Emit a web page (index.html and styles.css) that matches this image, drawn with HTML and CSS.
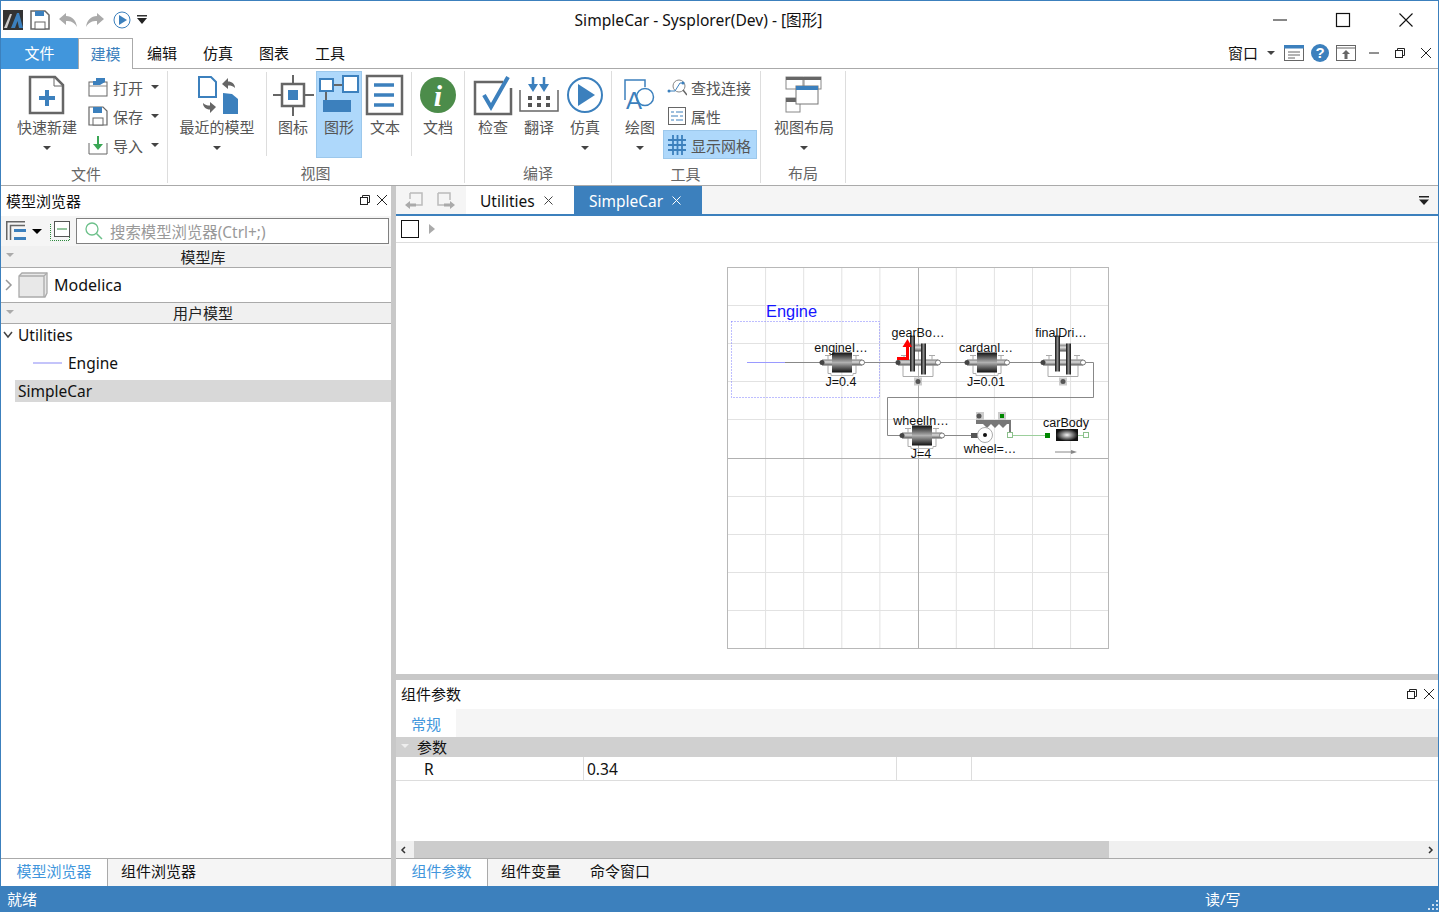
FILE: index.html
```html
<!DOCTYPE html>
<html>

	<head>
		<meta charset="utf-8" />
		<title>SimpleCar - Sysplorer(Dev) - [图形]</title>
		<link rel="stylesheet" href="styles.css">
	</head>

	<body>
		<div class="window">
			<header class="titlebar">
				<div class="quick">
					<svg class="logo" width="20" height="20" viewBox="0 0 20 20"><rect width="20" height="20" fill="#333"/><path d="M1 18L7 4H9L4 18Z" fill="#ccc"/><path d="M8 18L14 3H16L20 18H16L14.500 11L12 18Z" fill="#3c80bd"/></svg>
					<svg width="20" height="20" viewBox="0 0 20 20"><path d="M1 1H15L19 5V19H1Z" fill="#fff" stroke="#666" stroke-width="1.500"/><rect x="5" y="1" width="9" height="5" fill="#3c80bd"/><rect x="5" y="12" width="10" height="7" fill="#fff" stroke="#666"/></svg>
					<svg class="gap" width="18" height="14" viewBox="0 0 18 14"><path d="M0 6L7 0V3C13 3 17 7 18 14C15 9 12 8 7 8V12Z" fill="#aaa"/></svg>
					<svg class="gap" width="18" height="14" viewBox="0 0 18 14"><path d="M18 6L11 0V3C5 3 1 7 0 14C3 9 6 8 11 8V12Z" fill="#aaa"/></svg>
					<svg class="gap" width="18" height="18" viewBox="0 0 18 18"><circle cx="9" cy="9" r="8" fill="#fff" stroke="#3c80bd"/><path d="M6 4L14 9L6 14Z" fill="#3c80bd"/></svg>
					<svg class="gap-s" width="10" height="10" viewBox="0 0 10 10"><rect y="0" width="10" height="1.500" fill="#333"/><path d="M0 3H10L5 9Z" fill="#222"/></svg>
				</div>
				<div class="apptitle">SimpleCar - Sysplorer(Dev) - [图形]</div>
				<div class="winctl">
					<svg width="16" height="16" viewBox="0 0 16 16"><path d="M1 8H15" stroke="#111"/></svg>
					<svg width="16" height="16" viewBox="0 0 16 16"><rect x="1.500" y="1.500" width="13" height="13" fill="none" stroke="#111" stroke-width="1.200"/></svg>
					<svg width="16" height="16" viewBox="0 0 16 16"><path d="M1.500 1.500L14.500 14.500M14.500 1.500L1.500 14.500" stroke="#111" stroke-width="1.100"/></svg>
				</div>
			</header>

			<nav class="menubar">
				<div class="menu-file">文件</div>
				<div class="menu-active">建模</div>
				<div class="menu-item">编辑</div>
				<div class="menu-item">仿真</div>
				<div class="menu-item">图表</div>
				<div class="menu-item">工具</div>
				<div class="menu-right">
					<span>窗口</span>
					<i class="caret caret-menu"></i>
					<svg width="20" height="16" viewBox="0 0 20 16"><rect x=".5" y=".5" width="19" height="15" fill="#fff" stroke="#666"/><rect width="20" height="3.500" fill="#3c80bd"/><path d="M4 7H16M4 10H16M4 13H11" stroke="#666"/></svg>
					<svg class="help" width="18" height="18" viewBox="0 0 18 18"><circle cx="9" cy="9" r="9" fill="#3c80bd"/><text x="9" y="14" text-anchor="middle" class="help-mark">?</text></svg>
					<svg class="help" width="20" height="16" viewBox="0 0 20 16"><rect x=".5" y=".5" width="19" height="15" fill="#fff" stroke="#666"/><path d="M0 3H20" stroke="#666"/><path d="M10 5L14 9H11.500V14H8.500V9H6Z" fill="#666"/></svg>
					<svg class="mdi" width="10" height="10" viewBox="0 0 10 10"><path d="M0 5H10" stroke="#222"/></svg>
					<svg class="mdi" width="10" height="10" viewBox="0 0 10 10"><rect x=".5" y="2.500" width="7" height="7" fill="#fff" stroke="#222"/><path d="M2.500 2.500V.5H9.500V7.500H7.500" fill="none" stroke="#222"/></svg>
					<svg class="mdi" width="10" height="10" viewBox="0 0 10 10"><path d="M0 0L10 10M10 0L0 10" stroke="#222"/></svg>
				</div>
			</nav>

			<section class="ribbon">
				<div class="group group-file">
					<div class="group-body">
						<div class="big big-new">
							<svg width="42" height="42" viewBox="0 0 42 42"><path d="M4 3H29L37 11V39H4Z" fill="#fff" stroke="#666" stroke-width="2.500"/><path d="M28 3V12H37" fill="none" stroke="#666"/><path d="M21 16V32M13 24H29" stroke="#3c80bd" stroke-width="4"/></svg>
							<span>快速新建</span><i class="caret"></i>
						</div>
						<div class="smalls smalls-file">
							<div class="small"><svg width="20" height="20" viewBox="0 0 20 20"><rect x="1" y="5" width="18" height="14" fill="#fff" stroke="#666"/><path d="M1 9H19" stroke="#888"/><path d="M5 8V4H8V1H17V5L12 8Z" fill="#3c80bd"/></svg><span>打开</span><i class="caret"></i></div>
							<div class="small"><svg width="20" height="20" viewBox="0 0 20 20"><path d="M1 1H15L19 5V19H1Z" fill="#fff" stroke="#666" stroke-width="1.200"/><rect x="5" y="1" width="9" height="6" fill="#3c80bd"/><rect x="5" y="12" width="10" height="7" fill="#fff" stroke="#666"/></svg><span>保存</span><i class="caret"></i></div>
							<div class="small"><svg width="20" height="20" viewBox="0 0 20 20"><path d="M1 8V19H19V8" fill="none" stroke="#666"/><path d="M10 1V11" stroke="#3aa655" stroke-width="2"/><path d="M5 9H15L10 15Z" fill="#3aa655"/></svg><span>导入</span><i class="caret"></i></div>
						</div>
					</div>
					<div class="group-label label-file">文件</div>
				</div>

				<div class="group group-view">
					<div class="group-body">
						<div class="big big-recent">
							<svg width="42" height="42" viewBox="0 0 42 42"><path d="M3 3H15L20 8V23H3Z" fill="#fff" stroke="#3c80bd" stroke-width="2"/><path d="M27 19V40H42V25L36 20Z" fill="#3c80bd"/><path d="M26 10L32 4V7.500C36 7.500 39 10 39 14C37 12 35 11.500 32 11.500V15Z" fill="#666"/><path d="M20 33L14 39V35.500C10 35.500 7 33 7 29C9 31 11 31.500 14 31.500V28Z" fill="#666"/></svg>
							<span>最近的模型</span><i class="caret"></i>
						</div>
						<div class="sep"></div>
						<div class="big">
							<svg width="42" height="42" viewBox="0 0 42 42"><path d="M21 1V11M21 32V42M1 21H10M32 21H42" stroke="#666" stroke-width="2"/><rect x="10" y="10" width="22" height="22" fill="#fff" stroke="#666" stroke-width="2.500"/><rect x="16" y="16" width="10" height="10" fill="#3c80bd"/></svg>
							<span>图标</span>
						</div>
						<div class="big big-on">
							<svg width="42" height="42" viewBox="0 0 42 42"><path d="M8 18V30M15 11H25" stroke="#666" stroke-width="2"/><rect x="2" y="5" width="13" height="12" fill="#fff" stroke="#3c80bd" stroke-width="2"/><rect x="25" y="2" width="15" height="16" fill="#fff" stroke="#3c80bd" stroke-width="2"/><rect x="5" y="26" width="28" height="12" fill="#3c80bd"/></svg>
							<span>图形</span>
						</div>
						<div class="big">
							<svg width="42" height="42" viewBox="0 0 42 42"><rect x="3" y="2" width="35" height="38" fill="#fff" stroke="#666" stroke-width="2.500"/><path d="M10 11H30M10 21H30M10 31H30" stroke="#3c80bd" stroke-width="3.500"/></svg>
							<span>文本</span>
						</div>
						<div class="sep sep-doc"></div>
						<div class="big">
							<svg width="42" height="42" viewBox="0 0 42 42"><circle cx="21" cy="21" r="18" fill="#4c8c4a"/><text x="21" y="32" text-anchor="middle" class="info-mark">i</text></svg>
							<span>文档</span>
						</div>
					</div>
					<div class="group-label label-view">视图</div>
				</div>

				<div class="group group-compile">
					<div class="group-body">
						<div class="big">
							<svg width="42" height="42" viewBox="0 0 42 42"><path d="M39 14V40H3V8H31" fill="none" stroke="#666" stroke-width="2.500"/><path d="M12 21L19 33L36 3" fill="none" stroke="#3c80bd" stroke-width="4"/></svg>
							<span>检查</span>
						</div>
						<div class="big">
							<svg width="42" height="42" viewBox="0 0 42 42"><path d="M2 16V37H40V16" fill="none" stroke="#666" stroke-width="1.500"/><path d="M15 3V12M26 3V12" stroke="#3c80bd" stroke-width="2.500"/><path d="M10 10H20L15 18ZM21 10H31L26 18Z" fill="#3c80bd"/><path d="M10 22h4v4h-4zM19 22h4v4h-4zM28 22h4v4h-4zM10 29h4v4h-4zM19 29h4v4h-4zM28 29h4v4h-4z" fill="#555"/></svg>
							<span>翻译</span>
						</div>
						<div class="big">
							<svg width="42" height="42" viewBox="0 0 42 42"><circle cx="21" cy="21" r="17" fill="#fff" stroke="#3c80bd" stroke-width="2"/><path d="M14 10L31 21L14 32Z" fill="#3c80bd"/></svg>
							<span>仿真</span><i class="caret"></i>
						</div>
					</div>
					<div class="group-label label-compile">编译</div>
				</div>

				<div class="group group-tools">
					<div class="group-body">
						<div class="big">
							<svg width="42" height="42" viewBox="0 0 42 42"><path d="M6 26V6H26V13" fill="none" stroke="#3c80bd" stroke-width="1.500"/><circle cx="26" cy="23" r="8.500" fill="#fff" stroke="#3c80bd" stroke-width="1.500"/><text x="7" y="35" class="draw-mark">A</text></svg>
							<span>绘图</span><i class="caret"></i>
						</div>
						<div class="smalls">
							<div class="small small-tool"><svg width="20" height="20" viewBox="0 0 20 20"><circle cx="12" cy="9" r="6" fill="#fff" stroke="#888"/><path d="M16 13L20 18" stroke="#666" stroke-width="1.500"/><path d="M1 14H8L13 6H16" fill="none" stroke="#3c80bd"/><circle cx="2" cy="14" r="1.500" fill="#3c80bd"/><circle cx="16" cy="6" r="1.500" fill="#3c80bd"/></svg><span>查找连接</span></div>
							<div class="small small-tool"><svg width="20" height="20" viewBox="0 0 20 20"><rect x="1.500" y="1.500" width="17" height="17" fill="#fff" stroke="#666"/><path d="M4 6H7M9 6H16M4 10H11M13 10H16M4 14H7M9 14H16" stroke="#3c80bd"/></svg><span>属性</span></div>
							<div class="small small-tool small-on"><svg width="20" height="20" viewBox="0 0 20 20"><path d="M6 0V20M10.500 0V20M15 0V20M1 5H19M1 10H19M1 15H19" stroke="#3c80bd" stroke-width="1.800"/></svg><span>显示网格</span></div>
						</div>
					</div>
					<div class="group-label label-tools">工具</div>
				</div>

				<div class="group group-layout">
					<div class="group-body">
						<div class="big big-layout">
							<svg width="42" height="42" viewBox="0 0 42 42"><rect x="3" y="3" width="17" height="12" fill="#fff" stroke="#888"/><rect x="21" y="3" width="17" height="12" fill="#fff" stroke="#888"/><rect x="3" y="24" width="14" height="14" fill="#fff" stroke="#888"/><path d="M3 3H38V6H3ZM3 24H17V28H3Z" fill="#666"/><rect x="13" y="12" width="22" height="18" fill="#fff" stroke="#777"/><rect x="13" y="12" width="22" height="4" fill="#3c80bd"/></svg>
							<span>视图布局</span><i class="caret"></i>
						</div>
					</div>
					<div class="group-label label-layout">布局</div>
				</div>
			</section>

			<main class="workspace">
				<aside class="browser">
					<div class="pane-title">
						<span>模型浏览器</span>
						<div class="pane-ctl">
							<svg width="10" height="10" viewBox="0 0 10 10"><rect x=".5" y="2.500" width="7" height="7" fill="#fff" stroke="#222"/><path d="M2.500 2.500V.5H9.500V7.500H7.500" fill="none" stroke="#222"/></svg>
							<svg width="10" height="10" viewBox="0 0 10 10"><path d="M0 0L10 10M10 0L0 10" stroke="#222"/></svg>
						</div>
					</div>
					<div class="search-row">
						<svg width="20" height="20" viewBox="0 0 20 20"><path d="M.75 19V.75H19" fill="none" stroke="#666" stroke-width="1.500"/><path d="M4.500 19V4.500H19" fill="none" stroke="#666" stroke-width="1.500"/><path d="M8 9.500H20M8 17.500H20" stroke="#3c80bd" stroke-width="3"/></svg>
						<i class="caret caret-black"></i>
						<svg class="collapse" width="20" height="20" viewBox="0 0 20 20"><path d="M.5 3V19.500H19.500V3" fill="none" stroke="#2a8a3c" stroke-dasharray="1 1"/><rect x="4.500" y=".5" width="15" height="15" fill="#fff" stroke="#555"/><path d="M7 8H17" stroke="#2a8a3c"/></svg>
						<div class="search-box">
							<svg width="18" height="18" viewBox="0 0 18 18"><circle cx="7" cy="7" r="6" fill="none" stroke="#6cc08a" stroke-width="1.300"/><path d="M11.500 11.500L17 17" stroke="#6cc08a" stroke-width="1.500"/></svg>
							<span>搜索模型浏览器(Ctrl+;)</span>
						</div>
					</div>
					<div class="section"><i class="tri"></i>模型库</div>
					<div class="lib-row">
						<svg width="8" height="12" viewBox="0 0 8 12"><path d="M1 1L6 6L1 11" fill="none" stroke="#999" stroke-width="1.500"/></svg>
						<svg class="cube" width="30" height="26" viewBox="0 0 30 26"><path d="M1 4L4 1H29V21L27 25H1Z" fill="#e8e8e8" stroke="#aaa" stroke-width="1.300"/><path d="M1 4H26V25M26 4L29 1" fill="none" stroke="#aaa" stroke-width="1.300"/></svg>
						<span>Modelica</span>
					</div>
					<div class="section section-top"><i class="tri"></i>用户模型</div>
					<div class="tree-row tree-parent">
						<svg width="10" height="8" viewBox="0 0 10 8"><path d="M1 1L5 6L9 1" fill="none" stroke="#444" stroke-width="1.500"/></svg>
						<span>Utilities</span>
					</div>
					<div class="tree-row tree-child"><i class="pkg-line"></i><span>Engine</span></div>
					<div class="tree-sel">SimpleCar</div>
					<div class="fill"></div>
					<div class="bottom-tabs">
						<div class="btab-on btab-left">模型浏览器</div>
						<div class="btab btab-second">组件浏览器</div>
					</div>
				</aside>

				<div class="content">
					<div class="doc-tabs">
						<div class="doc-nav">
							<svg width="20" height="20" viewBox="0 0 20 20"><path d="M6 3H18V15H9" fill="none" stroke="#bbb" stroke-width="1.500"/><path d="M6 3V9" stroke="#bbb" stroke-width="1.500"/><path d="M1 15L6 11V13.500H12V16.500H6V19Z" fill="#aaa"/></svg>
							<svg width="20" height="20" viewBox="0 0 20 20"><path d="M2 3H14V10M2 3V15H8" fill="none" stroke="#bbb" stroke-width="1.500"/><path d="M19 15L14 11V13.500H8V16.500H14V19Z" fill="#aaa"/></svg>
						</div>
						<div class="doc-tab">Utilities<svg width="9" height="9" viewBox="0 0 9 9"><path d="M.5 .5L8.500 8.500M8.500 .5L.5 8.500" stroke="#444"/></svg></div>
						<div class="doc-tab doc-tab-on">SimpleCar<svg width="9" height="9" viewBox="0 0 9 9"><path d="M.5 .5L8.500 8.500M8.500 .5L.5 8.500" stroke="#fff"/></svg></div>
						<svg class="doc-more" width="10" height="10" viewBox="0 0 10 10"><rect width="10" height="1.500" fill="#222"/><path d="M0 3.500H10L5 9Z" fill="#222"/></svg>
					</div>
					<div class="canvas-tools"><i class="check"></i><i class="tri-right"></i></div>

					<div class="canvas">
						<svg class="diagram" width="382" height="382" viewBox="727 267 382 382">
							<defs>
								<linearGradient id="drum" x1="0" y1="0" x2="0" y2="1">
									<stop offset="0" stop-color="#111"/><stop offset=".5" stop-color="#b0b0b0"/><stop offset="1" stop-color="#111"/>
								</linearGradient>
								<linearGradient id="shaft" x1="0" y1="0" x2="0" y2="1">
									<stop offset="0" stop-color="#777"/><stop offset=".4" stop-color="#ddd"/><stop offset="1" stop-color="#555"/>
								</linearGradient>
								<linearGradient id="disc" x1="0" y1="0" x2="1" y2="0">
									<stop offset="0" stop-color="#111"/><stop offset=".5" stop-color="#888"/><stop offset="1" stop-color="#111"/>
								</linearGradient>
								<radialGradient id="body"><stop offset="0" stop-color="#f4f4f4"/><stop offset="1" stop-color="#111"/></radialGradient>
								<g id="inertia">
									<path d="M-14 -3V-7M-17 -7H-11M14 -3V-7M11 -7H17M-14 3V11H-11M14 3V11H11" fill="none" stroke="#aaa"/>
									<path d="M-11 11V13H11V11" fill="none" stroke="#bbb"/>
									<rect x="-20" y="-3" width="10" height="6" fill="url(#shaft)"/>
									<rect x="10" y="-3" width="10" height="6" fill="url(#shaft)"/>
									<circle cx="-20" r="2.500" fill="#444"/>
									<circle cx="20" r="2.500" fill="#fff" stroke="#777"/>
									<rect x="-10" y="-10" width="20" height="20" fill="url(#drum)"/>
								</g>
								<g id="gear">
									<path d="M-15 3V14H15V3M-14 -3V-7M14 -3V-7M-17 -7H-11M11 -7H17" fill="none" stroke="#aaa"/>
									<rect x="-20" y="-3" width="12" height="6" fill="url(#shaft)"/>
									<rect x="-4" y="-18" width="8" height="7" fill="url(#shaft)"/>
									<rect x="-4" y="-3" width="8" height="6" fill="url(#shaft)"/>
									<rect x="8" y="-3" width="12" height="6" fill="url(#shaft)"/>
									<rect x="-8" y="-27" width="5" height="36" fill="url(#disc)"/>
									<rect x="3" y="-19" width="5" height="31" fill="url(#disc)"/>
									<circle cx="-20" r="2.500" fill="#444"/>
									<circle cx="20" r="2.500" fill="#fff" stroke="#777"/>
									<rect x="-4" y="15" width="8" height="8" fill="#ccc"/>
									<circle cy="19" r="2.500" fill="#555"/>
								</g>
							</defs>
							<path class="grid" d="M765.600 267V649M803.700 267V649M841.800 267V649M879.900 267V649M956.300 267V649M994.400 267V649M1032.500 267V649M1070.600 267V649M727 305.500H1109M727 343.500H1109M727 381.500H1109M727 419.500H1109M727 496.500H1109M727 534.500H1109M727 572.500H1109M727 610.500H1109"/>
							<path class="axis" d="M918.500 267V649M727 458.500H1109"/>
							<rect class="frame" x="727.500" y="267.500" width="381" height="381"/>

							<rect class="select" x="731.500" y="321.500" width="148" height="76"/>
							<text class="engine-label" x="766" y="317">Engine</text>

							<path d="M747 362.500H785" stroke="#9a9aff"/>
							<path d="M785 362.500H822" stroke="#888"/>
							<path class="wire" d="M862 362.500H898M938 362.500H967M1008 362.500H1043M1083 362.500H1093.500V397.500H887.500V435.500H901M943 435.500H974"/>

							<use href="#inertia" x="842" y="362.500"/>
							<use href="#gear" x="918" y="362.500"/>
							<use href="#inertia" x="987" y="362.500"/>
							<use href="#gear" x="1063" y="362.500"/>
							<use href="#inertia" x="922" y="435.500"/>

							<path d="M897 358.500H907.500V345" fill="none" stroke="#f00" stroke-width="3"/>
							<path d="M902.500 347L907.500 339L912 347Z" fill="#f00"/>

							<rect x="976" y="412" width="8" height="8" fill="#ccc"/><circle cx="979" cy="416" r="2.500" fill="#555"/>
							<rect x="998" y="412" width="8" height="8" fill="#ccc"/><rect x="1000" y="414" width="4" height="4" fill="#080"/>
							<path d="M976 420H1011V436H1009V424H1007L1003 428L999 424L995 428L991 424L987 428L983 424H976Z" fill="#777"/>
							<rect x="971" y="433" width="8" height="5" fill="#555"/>
							<circle cx="985" cy="435" r="7.500" fill="#fff" stroke="#aaa"/>
							<circle cx="985" cy="435" r="2" fill="#111"/>
							<path d="M1012 435.500H1046" stroke="#9ccf9c"/>
							<rect x="1007.500" y="432.500" width="5" height="5" fill="#fff" stroke="#8bc08b"/>
							<rect x="1045" y="433" width="5" height="5" fill="#080"/>
							<rect x="1056" y="429" width="22" height="12" fill="url(#body)"/>
							<path d="M1078 435.500H1084" stroke="#9ccf9c"/>
							<rect x="1083.500" y="432.500" width="5" height="5" fill="#fff" stroke="#8bc08b"/>
							<path d="M1055 452H1072" stroke="#888"/><path d="M1071 450L1077 452L1071 454Z" fill="#888"/>

							<text class="label" x="841" y="352">engineI…</text>
							<text class="label" x="841" y="386">J=0.4</text>
							<text class="label" x="918" y="337">gearBo…</text>
							<text class="label" x="986" y="352">cardanI…</text>
							<text class="label" x="986" y="386">J=0.01</text>
							<text class="label" x="1061" y="337">finalDri…</text>
							<text class="label" x="921" y="425">wheelIn…</text>
							<text class="label" x="921" y="458">J=4</text>
							<text class="label" x="990" y="453">wheel=…</text>
							<text class="label" x="1066" y="427">carBody</text>
						</svg>
					</div>

					<div class="params">
						<div class="params-title">
							<span>组件参数</span>
							<div class="pane-ctl">
								<svg width="10" height="10" viewBox="0 0 10 10"><rect x=".5" y="2.500" width="7" height="7" fill="#fff" stroke="#222"/><path d="M2.500 2.500V.5H9.500V7.500H7.500" fill="none" stroke="#222"/></svg>
								<svg width="10" height="10" viewBox="0 0 10 10"><path d="M0 0L10 10M10 0L0 10" stroke="#222"/></svg>
							</div>
						</div>
						<div class="params-tabs"><div class="params-tab">常规</div></div>
						<div class="params-head"><i class="tri tri-pale"></i>参数</div>
						<div class="params-row">
							<div class="cell cell-name">R</div>
							<div class="cell cell-value">0.34</div>
							<div class="cell cell-unit"></div>
							<div class="cell cell-rest"></div>
						</div>
						<div class="fill"></div>
						<div class="hscroll">
							<svg width="18" height="16" viewBox="0 0 18 16"><path d="M9 5L6 8L9 11" fill="none" stroke="#333" stroke-width="1.500"/></svg>
							<div class="hscroll-thumb"></div>
							<svg class="hscroll-end" width="18" height="16" viewBox="0 0 18 16"><path d="M9 5L12 8L9 11" fill="none" stroke="#333" stroke-width="1.500"/></svg>
						</div>
						<div class="bottom-tabs">
							<div class="btab-on btab-params">组件参数</div>
							<div class="btab btab-vars">组件变量</div>
							<div class="btab btab-cmd">命令窗口</div>
						</div>
					</div>
				</div>
			</main>

			<footer class="statusbar">
				<span>就绪</span>
				<span class="rw">读/写</span>
				<svg class="grip" width="10" height="10" viewBox="0 0 10 10"><path d="M8 0h2v2H8zM4 4h2v2H4zM8 4h2v2H8zM0 8h2v2H0zM4 8h2v2H4zM8 8h2v2H8z" fill="#cfe0f0"/></svg>
			</footer>
		</div>
	</body>

</html>
```

FILE: styles.css
```css
* {
	box-sizing: border-box;
}

html, body {
	margin: 0;
	padding: 0;
}

body {
	width: 1439px;
	height: 912px;
	overflow: hidden;
	background: #fff;
	color: #111;
	font-family: "Noto Sans", "Noto Sans CJK SC", sans-serif;
	font-size: 15px;
}

i {
	display: block;
	font-style: normal;
}

svg {
	display: block;
	flex: none;
}

.window {
	width: 1439px;
	height: 912px;
	display: flex;
	flex-direction: column;
	border: 1px solid #3c80bd;
	border-bottom: 0;
}

/* title bar */
.titlebar {
	height: 37px;
	flex: none;
	display: flex;
	align-items: center;
}

.quick {
	width: 420px;
	padding-left: 2px;
	display: flex;
	align-items: center;
}

.quick .logo {
	margin-right: 7px;
}

.gap {
	margin-left: 9px;
}

.gap-s {
	margin-left: 6px;
}

.apptitle {
	width: 555px;
	text-align: center;
	font-size: 15.600px;
}

.winctl {
	margin-left: auto;
	padding-right: 24px;
	display: flex;
	gap: 47px;
}

/* menu row */
.menubar {
	height: 31px;
	flex: none;
	display: flex;
	align-items: stretch;
	border-bottom: 1px solid #aaa;
	line-height: 30px;
}

.menu-file {
	width: 77px;
	background: #4196dc;
	color: #fff;
	text-align: center;
	margin-bottom: -1px;
}

.menu-active {
	width: 55px;
	background: #fff;
	color: #3c80bd;
	text-align: center;
	border: 1px solid #aaa;
	border-bottom: 0;
	margin-bottom: -1px;
}

.menu-item {
	width: 56px;
	text-align: center;
}

.menu-item:nth-child(3) {
	margin-left: 1px;
}

.menu-right {
	margin-left: auto;
	padding-right: 7px;
	display: flex;
	align-items: center;
}

.menu-right span {
	margin-right: 4px;
}

.help {
	margin-left: 7px;
}

.help-mark {
	font: bold 15px "Liberation Sans", sans-serif;
	fill: #fff;
}

.mdi {
	margin-left: 13px;
}

.mdi + .mdi {
	margin-left: 16px;
}

.caret {
	width: 0;
	height: 0;
	border-left: 4px solid transparent;
	border-right: 4px solid transparent;
	border-top: 4px solid #444;
}

.caret-menu {
	margin: 0 9px 0 5px;
}

.caret-black {
	margin-left: 6px;
	border-left-width: 5px;
	border-right-width: 5px;
	border-top: 5px solid #000;
}

/* ribbon */
.ribbon {
	height: 117px;
	flex: none;
	display: flex;
	border-bottom: 1px solid #aaa;
	color: #555;
}

.group {
	flex: none;
	display: flex;
	flex-direction: column;
	border-right: 1px solid #ddd;
	margin-top: 2px;
	height: 112px;
}

.group-body {
	height: 89px;
	display: flex;
	align-items: flex-start;
}

.group-label {
	margin-top: 5px;
	text-align: center;
	line-height: 20px;
	color: #666;
}

.label-file {
	margin-left: 4px;
}

.label-view {
	margin-right: 6px;
}

.label-compile {
	margin-right: 5px;
}

.label-tools {
	margin-right: 6px;
}

.label-layout {
	margin-right: 7px;
}

.group-file {
	width: 167px;
}

.group-view {
	width: 297px;
	padding-left: 5px;
}

.group-compile {
	width: 147px;
	padding-left: 5px;
}

.group-tools {
	width: 149px;
	padding-left: 5px;
}

.group-layout {
	width: 85px;
	padding-left: 7px;
}

.big {
	width: 46px;
	height: 87px;
	padding-top: 2px;
	display: flex;
	flex-direction: column;
	align-items: center;
	border: 1px solid transparent;
	white-space: nowrap;
	line-height: 20px;
}

.big span {
	margin-top: 1px;
	margin-left: -20px;
	margin-right: -20px;
}

.big .caret {
	margin-top: 9px;
}

.big-new {
	width: 60px;
	margin-left: 16px;
}

.big-recent {
	width: 88px;
}

.big-layout {
	width: 70px;
	margin-left: 1px;
}

.big-on {
	background: #aed8fb;
	border-color: #9cc8ec;
}

.sep {
	width: 1px;
	height: 84px;
	background: #ddd;
	margin: 1px 3px 0 5px;
}

.sep-doc {
	margin: 1px 3px 0 3px;
}

.smalls {
	padding-top: 1px;
	display: flex;
	flex-direction: column;
}

.smalls-file {
	margin-left: 10px;
}

.small {
	height: 29px;
	display: flex;
	align-items: center;
	padding-left: 1px;
}

.small span {
	margin-left: 5px;
	padding-top: 2px;
}

.small .caret {
	margin-left: 8px;
}

.small-tool {
	width: 94px;
	padding-left: 3px;
	border: 1px solid transparent;
}

.small-tool span {
	margin-left: 4px;
}

.small-on {
	background: #aed8fb;
	border-color: #9cc8ec;
}

.info-mark {
	font: italic bold 30px "Liberation Serif", serif;
	fill: #fff;
}

.draw-mark {
	font: 24px "Liberation Sans", sans-serif;
	fill: #3c80bd;
}

/* main area */
.workspace {
	flex: 1;
	min-height: 0;
	display: flex;
}

.browser {
	width: 390px;
	flex: none;
	display: flex;
	flex-direction: column;
}

.pane-title {
	height: 30px;
	flex: none;
	display: flex;
	align-items: center;
	justify-content: space-between;
	padding: 0 4px 2px 5px;
}

.pane-ctl {
	display: flex;
	gap: 7px;
}

.search-row {
	height: 30px;
	flex: none;
	display: flex;
	align-items: center;
	padding-left: 5px;
	background: #f5f5f5;
}

.collapse {
	margin-left: 8px;
}

.search-box {
	width: 313px;
	height: 26px;
	margin-left: 6px;
	padding-left: 8px;
	display: flex;
	align-items: center;
	gap: 7px;
	background: #fff;
	border: 1px solid #808080;
	color: #999;
	font-size: 15.400px;
}

.section {
	height: 22px;
	flex: none;
	display: flex;
	align-items: center;
	justify-content: center;
	position: relative;
	padding-left: 14px;
	background: #f0f0f0;
	border-bottom: 1px solid #aaa;
	line-height: 20px;
	color: #222;
}

.section-top {
	border-top: 1px solid #aaa;
}

.tri {
	position: absolute;
	left: 5px;
	top: 7px;
	width: 0;
	height: 0;
	border-left: 4px solid transparent;
	border-right: 4px solid transparent;
	border-top: 4px solid #aaa;
}

.lib-row {
	height: 34px;
	flex: none;
	display: flex;
	align-items: center;
	padding-left: 4px;
	font-size: 16px;
}

.cube {
	margin-left: 5px;
	margin-right: 6px;
}

.tree-row {
	display: flex;
	align-items: center;
	flex: none;
	font-size: 15.500px;
}

.tree-parent {
	height: 22px;
	padding-left: 2px;
	gap: 5px;
}

.tree-child {
	height: 34px;
	padding-left: 32px;
	gap: 6px;
}

.pkg-line {
	width: 29px;
	height: 2px;
	background: #c4c4fa;
}

.tree-sel {
	height: 22px;
	flex: none;
	margin-left: 14px;
	padding-left: 3px;
	background: #d8d8d8;
	line-height: 22px;
	font-size: 15.500px;
}

.fill {
	flex: 1;
	min-height: 0;
}

.bottom-tabs {
	height: 28px;
	flex: none;
	display: flex;
	background: #f5f5f5;
	border-top: 1px solid #aaa;
	line-height: 25px;
}

.btab-on {
	background: #fff;
	color: #4196dc;
	text-align: center;
	border-right: 1px solid #aaa;
}

.btab-left {
	width: 107px;
}

.btab-second {
	margin-left: 13px;
}

.btab-params {
	width: 92px;
}

.btab-vars {
	margin-left: 13px;
}

.btab-cmd {
	margin-left: 29px;
}

.content {
	flex: 1;
	min-width: 0;
	display: flex;
	flex-direction: column;
	border-left: 5px solid #c8c8c8;
}

.doc-tabs {
	height: 30px;
	flex: none;
	display: flex;
	align-items: stretch;
	background: #f5f5f5;
	border-bottom: 2px solid #3c80bd;
}

.doc-nav {
	width: 70px;
	padding-left: 8px;
	display: flex;
	align-items: center;
	gap: 12px;
}

.doc-tab {
	width: 108px;
	display: flex;
	align-items: center;
	padding: 1px 0 0 14px;
	gap: 9px;
	background: #fff;
	font-size: 15.500px;
}

.doc-tab-on {
	width: 128px;
	background: #3c80bd;
	color: #fff;
	padding-left: 15px;
}

.doc-more {
	margin: 10px 9px 0 auto;
}

.canvas-tools {
	height: 27px;
	flex: none;
	display: flex;
	align-items: center;
	padding-left: 5px;
	border-bottom: 1px solid #ddd;
}

.check {
	width: 18px;
	height: 18px;
	border: 1px solid #111;
}

.tri-right {
	margin-left: 10px;
	width: 0;
	height: 0;
	border-top: 5px solid transparent;
	border-bottom: 5px solid transparent;
	border-left: 6px solid #aaa;
}

.canvas {
	flex: 1;
	min-height: 0;
	display: flex;
	align-items: center;
	justify-content: center;
	padding: 0 0 1px 2px;
	border-bottom: 6px solid #c8c8c8;
}

.grid {
	fill: none;
	stroke: #e2e2e2;
}

.axis {
	fill: none;
	stroke: #b0b0b0;
}

.frame {
	fill: none;
	stroke: #b8b8b8;
}

.select {
	fill: none;
	stroke: #7c7cff;
	stroke-dasharray: 1 2;
}

.wire {
	fill: none;
	stroke: #888;
}

.engine-label {
	font: 16.400px "Liberation Sans", sans-serif;
	fill: #1414ff;
}

.label {
	font: 12.500px "Liberation Sans", sans-serif;
	fill: #111;
	text-anchor: middle;
}

/* parameter panel */
.params {
	height: 206px;
	flex: none;
	display: flex;
	flex-direction: column;
}

.params-title {
	height: 29px;
	flex: none;
	display: flex;
	align-items: center;
	justify-content: space-between;
	padding: 0 4px 2px 5px;
}

.params-tabs {
	height: 28px;
	flex: none;
	background: #f5f5f5;
}

.params-tab {
	width: 60px;
	height: 28px;
	background: #fff;
	color: #4196dc;
	text-align: center;
	line-height: 30px;
}

.params-head {
	height: 20px;
	flex: none;
	position: relative;
	padding-left: 21px;
	background: #d0d0d0;
	line-height: 20px;
}

.tri-pale {
	border-top-color: #eee;
}

.params-row {
	height: 24px;
	flex: none;
	display: flex;
	border-bottom: 1px solid #ddd;
	line-height: 24px;
	font-size: 15.500px;
}

.cell {
	border-right: 1px solid #ddd;
}

.cell-name {
	width: 188px;
	padding-left: 28px;
}

.cell-value {
	width: 313px;
	padding-left: 3px;
}

.cell-unit {
	width: 75px;
}

.cell-rest {
	border-right: 0;
}

.hscroll {
	height: 17px;
	flex: none;
	display: flex;
	align-items: center;
	background: #f0f0f0;
}

.hscroll-thumb {
	width: 695px;
	height: 17px;
	background: #cccccc;
}

.hscroll-end {
	margin-left: auto;
}

/* status bar */
.statusbar {
	height: 26px;
	flex: none;
	display: flex;
	align-items: center;
	padding: 0 0 2px 6px;
	background: #3c80bd;
	color: #fff;
}

.rw {
	margin-left: 1168px;
}

.grip {
	margin: 14px 0 0 auto;
}
```
